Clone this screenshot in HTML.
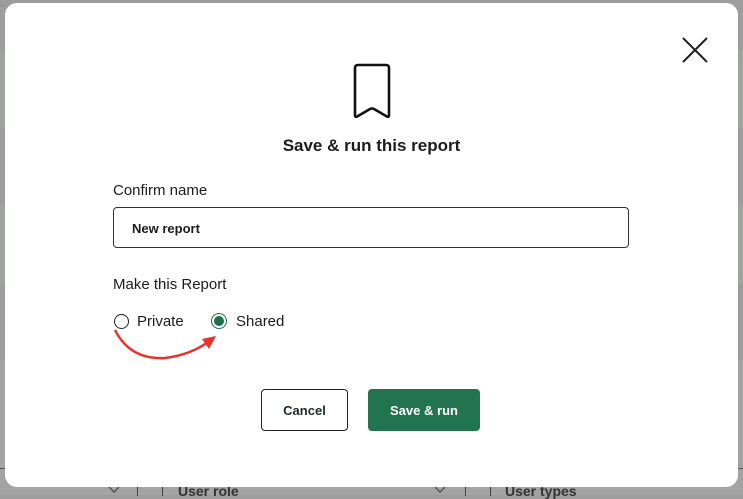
<!DOCTYPE html>
<html><head><style>
*{margin:0;padding:0;box-sizing:border-box}
body{width:743px;height:495px;overflow:hidden;background:#9d9d9d;font-family:"Liberation Sans",sans-serif;position:relative;color:#1c1c1c}
.band{position:absolute;left:0;width:743px;background:#9da59d}
.modal{position:absolute;left:5px;top:3px;width:733px;height:484px;background:#fff;border-radius:12px}
.abs{position:absolute}
.btn{position:absolute;top:389px;height:42px;border-radius:4px;font-size:13px;font-weight:bold;display:flex;align-items:center;justify-content:center}
</style></head><body>
<div class="band" style="top:50px;height:78px"></div>
<div class="band" style="top:205px;height:80px"></div>
<div class="abs" style="top:360px;left:0;width:743px;height:135px;background:#a3a3a3"></div>
<div class="abs" style="top:468px;left:0;width:743px;height:1px;background:#555"></div>
<div class="abs" style="top:486px;left:137px;width:1px;height:10px;background:#444"></div>
<div class="abs" style="top:486px;left:162px;width:1px;height:10px;background:#444"></div>
<div class="abs" style="top:486px;left:465px;width:1px;height:10px;background:#444"></div>
<div class="abs" style="top:486px;left:490px;width:1px;height:10px;background:#444"></div>
<svg class="abs" style="left:108px;top:486px" width="12" height="8"><path d="M1 1L6 6L11 1" fill="none" stroke="#444" stroke-width="1.2"/></svg>
<svg class="abs" style="left:434px;top:486px" width="12" height="8"><path d="M1 1L6 6L11 1" fill="none" stroke="#444" stroke-width="1.2"/></svg>
<div class="abs" style="top:483px;left:178px;font-size:14px;font-weight:bold;color:#333">User role</div>
<div class="abs" style="top:483px;left:505px;font-size:14px;font-weight:bold;color:#333">User types</div>
<div class="modal"></div>
<svg class="abs" style="left:682px;top:37px" width="26" height="26" viewBox="0 0 26 26"><path d="M1 1L25 25M25 1L1 25" stroke="#222" stroke-width="2"/></svg>
<svg class="abs" style="left:350px;top:62px" width="44" height="60" viewBox="0 0 44 60"><path d="M5 6Q5 3 8 3H36Q39 3 39 6V53Q39 56 36 54L24 47Q22 46 20 47L8 54Q5 56 5 53Z" fill="none" stroke="#111" stroke-width="2.6" stroke-linejoin="round"/></svg>
<div class="abs" style="left:0;width:743px;top:136px;text-align:center;font-size:17px;font-weight:bold">Save &amp; run this report</div>
<div class="abs" style="left:113px;top:182px;font-size:15px">Confirm name</div>
<div class="abs" style="left:113px;top:207px;width:516px;height:41px;border:1px solid #333;border-radius:4px;padding:13px 0 0 18px;font-size:13px;font-weight:bold">New report</div>
<div class="abs" style="left:113px;top:276px;font-size:15px">Make this Report</div>
<div class="abs" style="left:114px;top:314px;width:15px;height:15px;border:1.3px solid #222;border-radius:50%"></div>
<div class="abs" style="left:137px;top:313px;font-size:15px">Private</div>
<div class="abs" style="left:211px;top:313px;width:16px;height:16px;border:1.3px solid #1e6e4c;border-radius:50%;padding:2px"><div style="width:100%;height:100%;background:#1f6e4c;border-radius:50%"></div></div>
<div class="abs" style="left:236px;top:313px;font-size:15px">Shared</div>
<svg class="abs" style="left:110px;top:325px" width="110" height="40" viewBox="0 0 110 40"><path d="M5 5Q20 35 55 33Q80 30 98 17" fill="none" stroke="#e8322a" stroke-width="2.5"/><path d="M106 11L92 14L99 24Z" fill="#e8322a"/></svg>
<div class="btn" style="left:261px;width:87px;border:1.3px solid #222;color:#1c2a22">Cancel</div>
<div class="btn" style="left:368px;width:112px;background:#22734f;color:#fff">Save &amp; run</div>
</body></html>
